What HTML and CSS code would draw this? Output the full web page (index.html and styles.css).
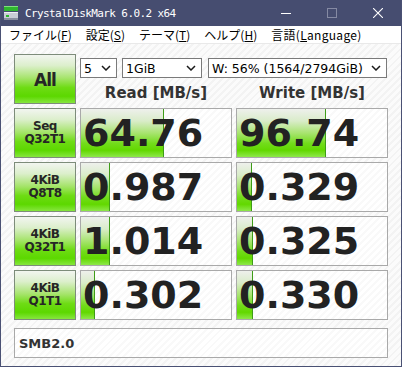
FILE: index.html
```html
<!DOCTYPE html>
<html lang="ja">
<head>
<meta charset="utf-8">
<title>CrystalDiskMark 6.0.2 x64</title>
<link rel="stylesheet" href="styles.css">
</head>
<body>
<div class="window">
  <div class="titlebar">
    <svg class="app-icon" width="14" height="15" viewBox="0 0 14 15">
      <rect x="0" y="0" width="14" height="5" fill="#2fb62f"/>
      <rect x="0" y="0" width="14" height="1" fill="#7fe07f"/>
      <rect x="0" y="6" width="14" height="8" fill="#c9cdd6"/>
      <rect x="0" y="6" width="14" height="1" fill="#eef0f4"/>
      <rect x="0" y="12" width="14" height="2" fill="#8a90a0"/>
      <rect x="2" y="9" width="3" height="2" fill="#2fb62f"/>
    </svg>
    <span class="title">CrystalDiskMark 6.0.2 x64</span>
    <div class="controls">
      <span class="ctl"><svg width="10" height="10" viewBox="0 0 10 10"><path d="M0 5.5H10" stroke="#ffffff" stroke-width="1"/></svg></span>
      <span class="ctl"><svg width="10" height="10" viewBox="0 0 10 10"><rect x="0.5" y="0.5" width="9" height="9" fill="none" stroke="#858aa3" stroke-width="1"/></svg></span>
      <span class="ctl"><svg width="10" height="10" viewBox="0 0 10 10"><path d="M0 0L10 10M10 0L0 10" stroke="#ffffff" stroke-width="1.1"/></svg></span>
    </div>
  </div>
  <div class="menubar">
    <span class="menu">ファイル(<u>F</u>)</span>
    <span class="menu">設定(<u>S</u>)</span>
    <span class="menu">テーマ(<u>T</u>)</span>
    <span class="menu">ヘルプ(<u>H</u>)</span>
    <span class="menu">言語(<u>L</u>anguage)</span>
  </div>
  <div class="content">
    <div class="grid">
      <div class="btn all">All</div>
      <div class="top">
        <div class="selects">
          <div class="sel sel-count"><span>5</span><svg width="10" height="6" viewBox="0 0 10 6"><path d="M1 1L5 5L9 1" stroke="#1a1a1a" stroke-width="1.5" fill="none"/></svg></div>
          <div class="sel sel-size"><span>1GiB</span><svg width="10" height="6" viewBox="0 0 10 6"><path d="M1 1L5 5L9 1" stroke="#1a1a1a" stroke-width="1.5" fill="none"/></svg></div>
          <div class="sel sel-drive"><span>W: 56% (1564/2794GiB)</span><svg width="10" height="6" viewBox="0 0 10 6"><path d="M1 1L5 5L9 1" stroke="#1a1a1a" stroke-width="1.5" fill="none"/></svg></div>
        </div>
        <div class="headers">
          <div>Read [MB/s]</div>
          <div>Write [MB/s]</div>
        </div>
      </div>

      <div class="btn label">Seq<br>Q32T1</div>
      <div class="cell"><div class="bar" style="width:55.3%"></div><span class="val">64.76</span></div>
      <div class="cell"><div class="bar" style="width:59.3%"></div><span class="val">96.74</span></div>

      <div class="btn label">4KiB<br>Q8T8</div>
      <div class="cell"><div class="bar" style="width:19.3%"></div><span class="val">0.987</span></div>
      <div class="cell"><div class="bar" style="width:10%"></div><span class="val">0.329</span></div>

      <div class="btn label">4KiB<br>Q32T1</div>
      <div class="cell"><div class="bar" style="width:19.6%"></div><span class="val">1.014</span></div>
      <div class="cell"><div class="bar" style="width:10.6%"></div><span class="val">0.325</span></div>

      <div class="btn label">4KiB<br>Q1T1</div>
      <div class="cell"><div class="bar" style="width:9.6%"></div><span class="val">0.302</span></div>
      <div class="cell"><div class="bar" style="width:10.6%"></div><span class="val">0.330</span></div>
    </div>
    <div class="comment">SMB2.0</div>
  </div>
</div>
</body>
</html>
```

FILE: styles.css
```css
* { box-sizing: border-box; }
html, body { margin: 0; padding: 0; }
body {
  width: 402px;
  height: 367px;
  overflow: hidden;
  background: #ffffff;
  font-family: "DejaVu Sans", sans-serif;
}
.window {
  width: 402px;
  height: 367px;
  border: 1px solid #4a5174;
  border-top: 0;
  display: flex;
  flex-direction: column;
}
.titlebar {
  height: 26px;
  flex: none;
  background: #464d70;
  display: flex;
  align-items: center;
  color: #ffffff;
}
.app-icon { margin-left: 3px; flex: none; }
.title {
  margin-left: 7px;
  font-family: "DejaVu Sans Mono", monospace;
  font-size: 11px;
  letter-spacing: -0.6px;
  white-space: nowrap;
}
.controls {
  margin-left: auto;
  display: flex;
  height: 100%;
}
.ctl {
  width: 46px;
  display: flex;
  align-items: center;
  justify-content: center;
}
.menubar {
  height: 17px;
  flex: none;
  background: #ffffff;
  display: flex;
  align-items: center;
  padding-left: 1px;
  font-family: "Noto Sans CJK JP", sans-serif;
  font-size: 12px;
  line-height: 17px;
  color: #000000;
}
.menu { padding: 0 7px; white-space: nowrap; }
.menu:last-child { letter-spacing: 0.3px; }
.content {
  flex: 1;
  border-top: 1px solid #e9e9e9;
  padding: 10px 13px 0 13px;
  background: repeating-linear-gradient(135deg, #f3f3f3 0 2px, #fbfbfb 2px 5px);
}
.grid {
  display: grid;
  grid-template-columns: 62px 152px 152px;
  grid-auto-rows: 50px;
  gap: 4px;
}
.btn {
  border: 1px solid #7d8c7a;
  background: linear-gradient(#f2f5f0 0%, #dcefcc 22%, #a6e46c 48%, #6edc14 68%, #5cd800 86%, #86e63e 100%);
  display: flex;
  align-items: center;
  justify-content: center;
  text-align: center;
  color: #262626;
  font-weight: bold;
}
.all { font-size: 17px; letter-spacing: -1px; padding-top: 2px; }
.label { font-size: 12px; line-height: 13px; letter-spacing: -0.5px; }
.top {
  grid-column: 2 / 4;
  padding-top: 4px;
  display: flex;
  flex-direction: column;
}
.selects {
  display: flex;
  gap: 5px;
  height: 20px;
}
.sel {
  border: 1px solid #7a7a7a;
  background: #ffffff;
  display: flex;
  align-items: center;
  justify-content: space-between;
  padding: 0 5px 0 3px;
  font-size: 12.5px;
  color: #000000;
  white-space: nowrap;
}
.sel-count { width: 37px; }
.sel-size { width: 80px; }
.sel-drive { flex: 1; margin-left: 1px; margin-right: 1px; }
.headers {
  display: grid;
  grid-template-columns: 152px 152px;
  gap: 4px;
  margin-top: 6px;
  font-size: 15px;
  line-height: 18px;
  font-weight: bold;
  color: #333333;
  text-align: center;
}
.cell {
  position: relative;
  border: 1px solid #a9a9a9;
  background: repeating-linear-gradient(135deg, #f9f9f9 0 2px, #ffffff 2px 5px);
  overflow: hidden;
  display: flex;
  align-items: center;
}
.bar {
  position: absolute;
  left: 0;
  top: 0;
  bottom: 0;
  background: linear-gradient(#eef0ec 0%, #d9ecc9 25%, #a8e470 50%, #72dc1a 72%, #62d800 86%, #8ee84a 100%);
  border-right: 1px solid #3e9c18;
}
.val {
  position: relative;
  padding-left: 2px;
  font-size: 38px;
  line-height: 48px;
  font-weight: bold;
  color: #222222;
}
.comment {
  margin-top: 8px;
  height: 30px;
  border: 1px solid #a9a9a9;
  background: repeating-linear-gradient(135deg, #f9f9f9 0 2px, #ffffff 2px 5px);
  padding-left: 4px;
  display: flex;
  align-items: center;
  font-size: 13px;
  font-weight: bold;
  color: #333333;
}
```
